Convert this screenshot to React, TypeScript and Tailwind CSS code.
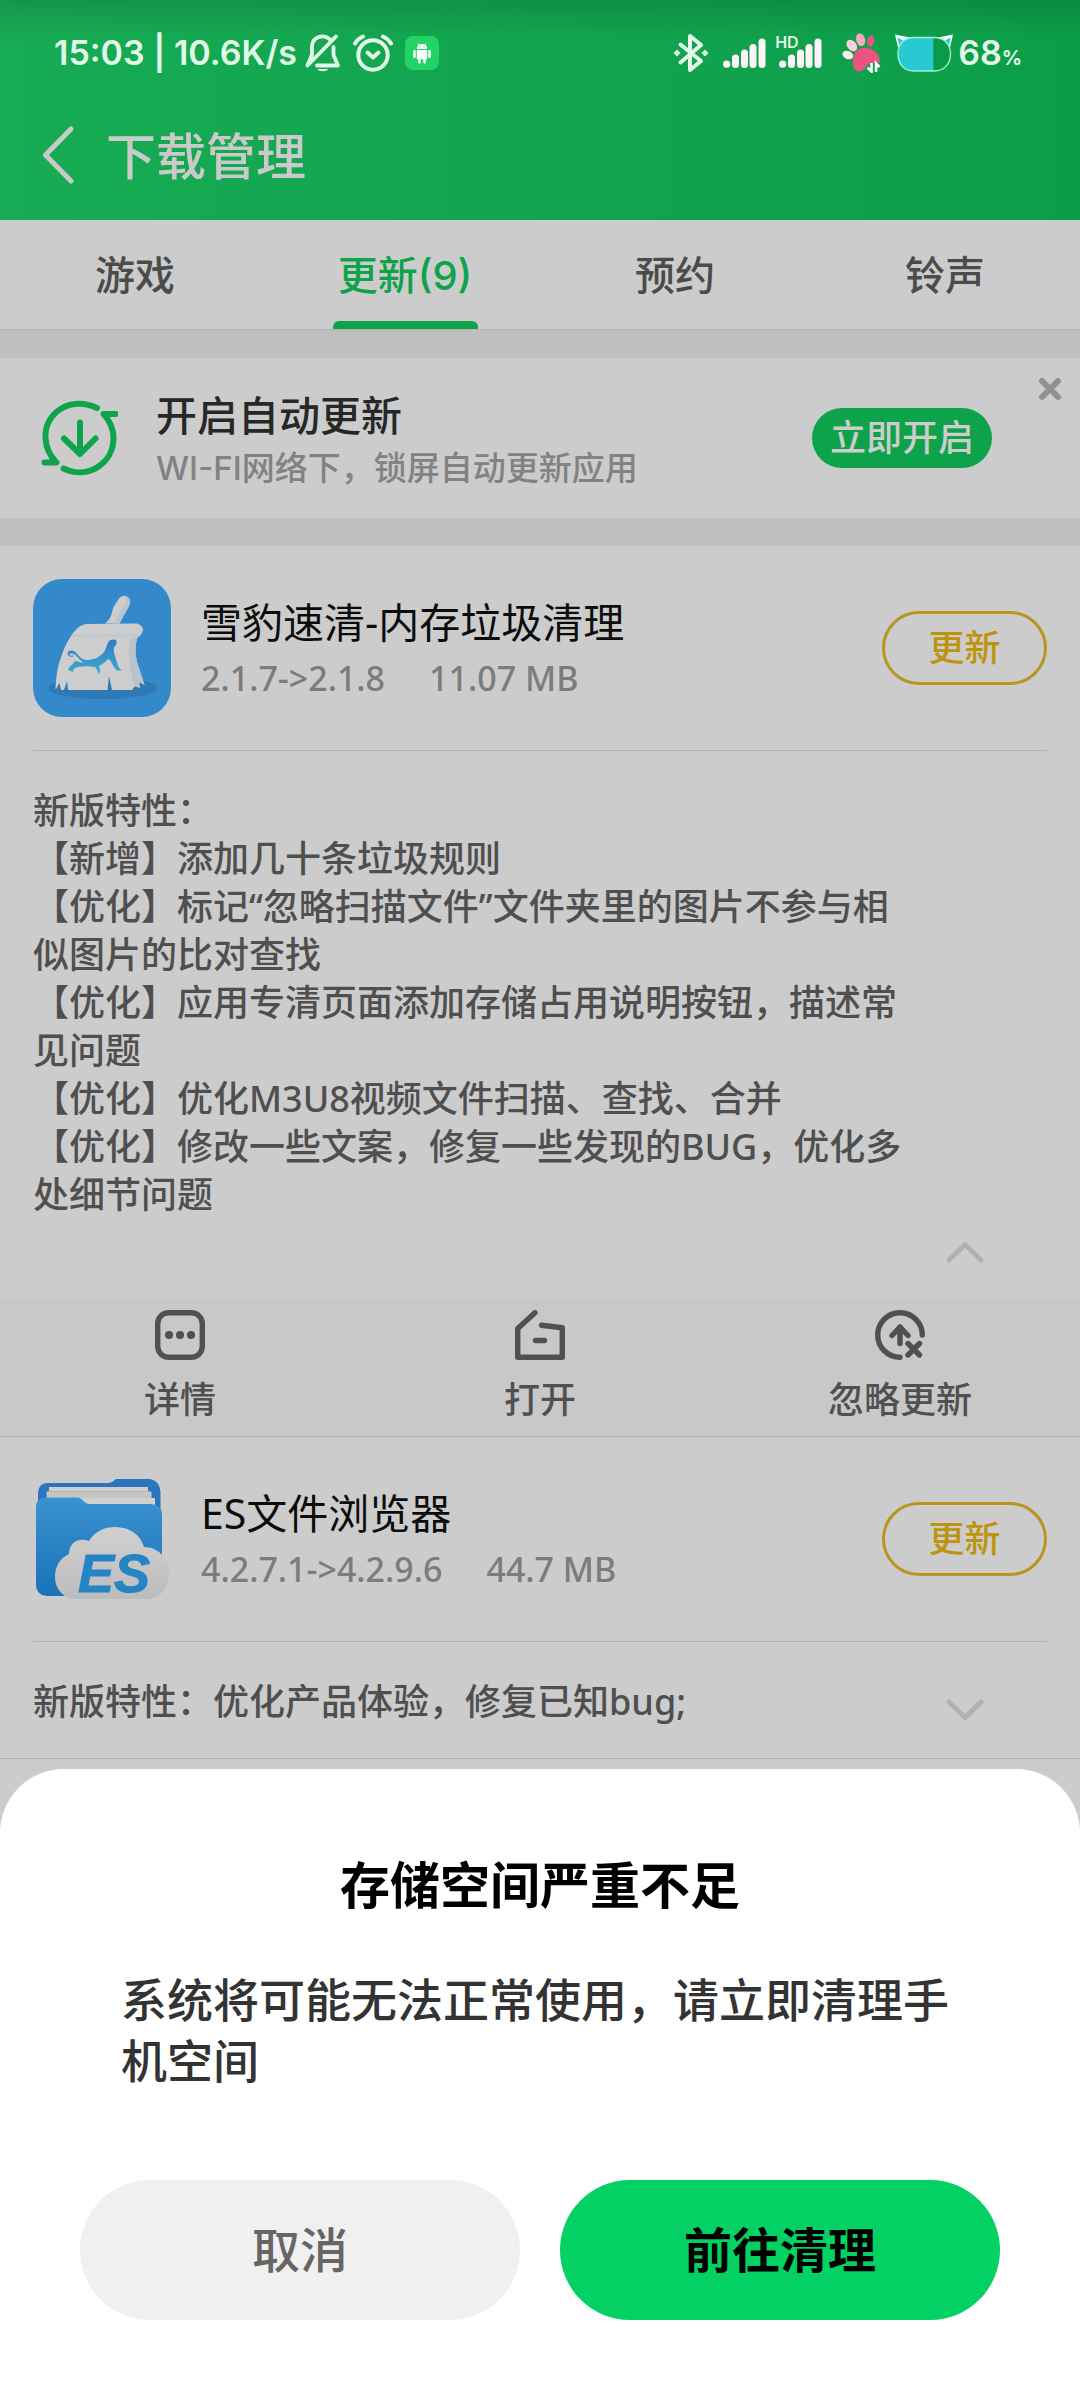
import React from "react";

const tabs = [
  { label: "游戏", active: false },
  { label: "更新(9)", active: true },
  { label: "预约", active: false },
  { label: "铃声", active: false },
];

const cleanerNotes = [
  "新版特性：",
  "【新增】添加几十条垃圾规则",
  "【优化】标记“忽略扫描文件”文件夹里的图片不参与相",
  "似图片的比对查找",
  "【优化】应用专清页面添加存储占用说明按钮，描述常",
  "见问题",
  "【优化】优化M3U8视频文件扫描、查找、合并",
  "【优化】修改一些文案，修复一些发现的BUG，优化多",
  "处细节问题",
];

const BellOffIcon = () => (
  <svg width="36" height="38" viewBox="0 0 36 38" fill="none" stroke="#e2f8e8" strokeWidth="3.8" strokeLinecap="round" strokeLinejoin="round">
    <path d="M25 5.5C22.500 3 20 2.300 17.500 2.300C10.500 2.300 7 7.500 7 13V20.500L2.500 31.500L31 2.500" />
    <path d="M28.500 13V21L33 31.500H12" />
    <path d="M12.500 35H23C22 38 13.500 38 12.500 35Z" fill="#e2f8e8" stroke="none" />
  </svg>
);

const AlarmIcon = () => (
  <svg width="40" height="38" viewBox="0 0 40 38" fill="none" stroke="#e2f8e8" strokeWidth="4" strokeLinecap="round" strokeLinejoin="round">
    <circle cx="20" cy="21" r="14.700" />
    <path d="M14.500 18.500L20 23.500L25.500 18.500" />
    <path d="M2 9.500C4 6 6.500 4 10 2.500M38 9.500C36 6 33.500 4 30 2.500" />
  </svg>
);

const AndroidBadge = () => (
  <svg width="34" height="34" viewBox="0 0 34 34">
    <rect width="34" height="34" rx="8" fill="#22d465" />
    <g fill="#fff">
      <path d="M11.800 13C12 9.800 14.300 8 17 8S22 9.800 22.200 13Z" />
      <path d="M11.800 14H22.200V23.200H20.800V26.200A1 1 0 0 1 18.300 26.200V23.200H15.700V26.200A1 1 0 0 1 13.200 26.200V23.200H11.800Z" />
      <rect x="8.200" y="14" width="2.600" height="8" rx="1.300" />
      <rect x="23.200" y="14" width="2.600" height="8" rx="1.300" />
    </g>
    <path d="M13.800 9L12.800 7.300M20.200 9L21.200 7.300" stroke="#fff" strokeWidth="0.800" />
    <circle cx="14.900" cy="10.900" r="0.600" fill="#22d465" />
    <circle cx="19.100" cy="10.900" r="0.600" fill="#22d465" />
  </svg>
);

const BluetoothIcon = () => (
  <svg width="36" height="40" viewBox="0 0 36 40" fill="none" stroke="#e2f8e8" strokeWidth="4" strokeLinejoin="round" strokeLinecap="round">
    <path d="M7.500 11.500L28 28L17 37V3L28 12L7.500 29.500" />
    <path d="M4 16.500L7.500 20L4 23.500L0.500 20ZM32 16.500L35.500 20L32 23.500L28.500 20Z" fill="#e2f8e8" stroke="none" />
  </svg>
);

const SignalBars = () => (
  <svg width="43" height="30" viewBox="0 0 43 30" fill="#fbf3f7">
    <circle cx="3.700" cy="26.200" r="3.600" />
    <rect x="9" y="16.500" width="7" height="13.500" rx="3.500" />
    <rect x="18" y="11.500" width="7" height="18.500" rx="3.500" />
    <rect x="26.500" y="6" width="7" height="24" rx="3.500" />
    <rect x="35.500" y="0.500" width="7" height="29.500" rx="3.500" />
  </svg>
);

const PawIcon = () => (
  <svg width="40" height="40" viewBox="0 0 40 40">
    <ellipse cx="5.800" cy="22" rx="5.600" ry="4" fill="#fbe9ee" transform="rotate(25 5.8 22)" />
    <ellipse cx="9.800" cy="12.500" rx="4.600" ry="6.500" fill="#fdd0dd" transform="rotate(-38 9.8 12.500)" />
    <ellipse cx="18.600" cy="6.800" rx="4.400" ry="6.500" fill="#fba9bf" transform="rotate(-14 18.600 6.800)" />
    <ellipse cx="28.700" cy="8.200" rx="3.500" ry="5.700" fill="#ea547f" transform="rotate(8 28.700 8.200)" />
    <path d="M13 20C16 14.500 23 14 28 15.500C34 17.500 38.500 23 37.500 29.500L27 30.500C24 33 22 38.500 17 38.500C10 38 9.500 26 13 20Z" fill="#ea547f" />
    <path d="M29.500 30V38.500L25.500 34.800M34 39V30.500L37.500 34" fill="none" stroke="#fff" strokeWidth="2.600" />
  </svg>
);

const CatBattery = () => (
  <svg width="60" height="40" viewBox="0 0 60 40">
    <path d="M1 1.500L16 4.500L4 14.500Z" fill="#fff" />
    <path d="M3.500 4.500L9 7.500L5 12.500Z" fill="#28c9d3" />
    <path d="M59 1.500L44 4.500L56 14.500Z" fill="#fff" />
    <path d="M56.500 4.500L51 7.500L55 12.500Z" fill="#28c9d3" />
    <path d="M39.500 4.500H20C9 4.500 4 12 4 21C4 31 9 38 20 38H39.500Z" fill="#28c9d3" />
    <path d="M39.500 4.500C51 4.500 56.500 12 56.500 21C56.500 31 51 38 39.500 38Z" fill="#0b9a47" />
    <path d="M20 4.500H40C51 4.500 56.500 12 56.500 21S51 38 40 38H20C9 38 4 30 4 21S9 4.500 20 4.500Z" fill="none" stroke="#9ff0d4" strokeWidth="1.400" />
  </svg>
);

const AutoUpdateIcon = () => (
  <svg width="78" height="76" viewBox="0 0 78 76" className="shrink-0" fill="none" stroke="#0fa44b" strokeWidth="6" strokeLinecap="round" strokeLinejoin="round">
    <path d="M57 8C31 -5 4 13 5.500 38C6 49 10 56 16.500 62.500H4.500" />
    <path d="M75.500 14H63.500C70 21 73.500 29 73.500 38C73.500 64 47 80 23.500 68.500" />
    <path d="M40 22.500V54M24 38.500L40 54L55.500 38.500" />
  </svg>
);

const CleanerIcon = () => (
  <svg width="138" height="138" viewBox="0 0 138 138" className="shrink-0">
    <defs>
      <linearGradient id="leopard" x1="0" y1="0" x2="0" y2="1">
        <stop offset="0" stopColor="#2f7fbf" />
        <stop offset="1" stopColor="#3fa9d2" />
      </linearGradient>
    </defs>
    <rect width="138" height="138" rx="29" fill="#3489cb" />
    <ellipse cx="69.500" cy="109" rx="54" ry="11" fill="#2e78b3" />
    <path d="M72 44.500C78 40 79 34 80 29L86 19.500C90 14 98 17 97 24C96 30 88 38 87 44.500Z" fill="#cdcdcd" />
    <path d="M91 17.500C98 17 98 24 95.500 28L86.500 44.500H82C84 36 90 30 92.500 24C93 21 92.500 19 91 17.500Z" fill="#b9c6cf" />
    <path d="M53 45L104 44.500Q109 46 110 50Q110 55 104 59Q101 72 104 83L111.500 106L106 103L107 109L102 107L99 111H79L76 97L74.500 111H35L34 102L31 111H28L26.500 104L22.500 111C23 99 24 88 28.500 77C31 68 36 60 40 54Q46 46 53 45Z" fill="#cdcdcd" />
    <path d="M40 55.500H108L106 57.500H39Z" fill="#b7c9d6" />
    <path d="M97 59H104Q101 72 104 83L111.500 106L106 103L107 109L101 107Q94 82 97 59Z" fill="#b7c4cb" />
    <path d="M40 78C34 79 32 71 39 71.500C44 72 47 81 53 81C61 81 66 79 71 73C75 68 73 61 80 60.500C84 60 85 64 82 67C79 70 82 76 84 83C85 88 87 90 89 91.500H84C79 88 79 81 75 80C72 84 69 85 66 87C67 90 68 93 66 95C64 92 64 90 62 88C55 87 50 87 45 88C41 89 40 91 40 93L35 91C36 87 40 86 41 83C43 81 47 84 50 84C45 79 41 73 37 75C36 77 38 77 40 76Z" fill="url(#leopard)" />
  </svg>
);

const EsIcon = () => (
  <svg width="138" height="138" viewBox="0 0 138 138" className="shrink-0">
    <defs>
      <linearGradient id="folder" x1="0" y1="0" x2="0" y2="1">
        <stop offset="0" stopColor="#3b92d0" />
        <stop offset="1" stopColor="#1873b8" />
      </linearGradient>
      <linearGradient id="cloud" x1="0" y1="0" x2="0" y2="1">
        <stop offset="0" stopColor="#d0d0d0" />
        <stop offset="1" stopColor="#bcbcbe" />
      </linearGradient>
    </defs>
    <path d="M5 40V22Q6 13 15 13H76Q80 12 83 9H117Q127 11 127.500 22V40Z" fill="#2a75bd" />
    <path d="M16 17H115V40H16Z" fill="#cfcfcf" />
    <path d="M13.500 22H118.500V40H13.500Z" fill="#c5c5c5" />
    <path d="M14 21.500H118" stroke="#b2b2b2" strokeWidth="0.800" />
    <path d="M40 28H122V42H40Z" fill="#d0d0d0" />
    <path d="M3 37Q3 27.500 12 27.500H45C50 28 50 33.500 56 34H118Q129 35 129 45V116Q129 126 119 126H14Q3 125 3 114Z" fill="url(#folder)" />
    <path d="M40 129C28 127 22 117 22 107C22 95 28 88 36 84C36 73 45 67 56 71C62 61 72 57 82 57C98 57 108 66 111 77C125 77 136 88 136 103C136 117 128 128 115 129Z" fill="url(#cloud)" />
    <text x="45" y="122" fontFamily="Liberation Sans, sans-serif" fontWeight="700" fontStyle="italic" fontSize="54" fill="#2784c4" stroke="#2784c4" strokeWidth="1">ES</text>
  </svg>
);

const DetailIcon = () => (
  <svg width="50" height="50" viewBox="0 0 50 50" fill="none" stroke="#505050">
    <rect x="2.700" y="2.700" width="44.600" height="44.600" rx="11" strokeWidth="5.400" />
    <path d="M14 25H14.100M25 25H25.100M36 25H36.100" strokeWidth="8" strokeLinecap="round" />
  </svg>
);

const OpenIcon = () => (
  <svg width="50" height="50" viewBox="0 0 50 50" fill="none" stroke="#505050" strokeWidth="5.400" strokeLinecap="round" strokeLinejoin="round">
    <path d="M20 2.700L2.700 18.500V47.300H47.300V17.700L26.500 15.200" />
    <path d="M20.500 30.500H29.500" />
  </svg>
);

const IgnoreIcon = () => (
  <svg width="50" height="50" viewBox="0 0 50 50" fill="none" stroke="#505050" strokeWidth="5.400" strokeLinecap="round" strokeLinejoin="round">
    <path d="M47.300 25A22.300 22.300 0 1 0 25 47.300" />
    <path d="M25 33.500V17M17 25.500L25 17L33 25.500" />
    <path d="M33 33.500L44.500 45M44.500 33.500L33 45" />
  </svg>
);

const Chevron = ({ up = false }: { up?: boolean }) => (
  <svg width="38" height="22" viewBox="0 0 38 22" fill="none" stroke="#b0b0b0" strokeWidth="5" strokeLinecap="round" strokeLinejoin="round">
    <path d={up ? "M3 19L19 3.500L35 19" : "M3 3L19 18.500L35 3"} />
  </svg>
);

const actions = [
  { label: "详情", icon: <DetailIcon /> },
  { label: "打开", icon: <OpenIcon /> },
  { label: "忽略更新", icon: <IgnoreIcon /> },
];

type AppRowProps = {
  icon: React.ReactNode;
  name: string;
  version: string;
  size: string;
};

const AppRow = ({ icon, name, version, size }: AppRowProps) => (
  <div className="mx-[33px] flex items-center border-b border-[#b3b3b3] py-[33px]">
    {icon}
    <div className="ml-[30px] flex-1">
      <h2 className="text-[41px] leading-[56px] text-[#0c0c0c]">{name}</h2>
      <p className="mt-1 flex gap-11 text-[34px] leading-[48px] font-medium text-[#7c7c7c]">
        <span>{version}</span>
        <span>{size}</span>
      </p>
    </div>
    <button
      type="button"
      className="h-[74px] w-[165px] rounded-full border-3 border-[#b8951f] text-[36px] leading-none font-medium text-[#bd940e]"
    >
      更新
    </button>
  </div>
);

const App = () => {
  return (
    <div className="min-h-screen bg-[#cccccc] font-['Noto_Sans','Noto_Sans_CJK_SC',sans-serif]">
      <header className="bg-linear-to-r from-[#17ab54] to-[#0c9d48]">
        <div className="flex h-[106px] items-center justify-between bg-linear-to-b from-black/12 to-transparent to-35% pr-[58px] pl-[54px] font-['Inter',sans-serif] text-[#e2f8e8]">
          <div className="flex items-center">
            <span className="text-[34px] leading-none font-semibold">15:03 | 10.6K/s</span>
            <div className="ml-2 flex items-center gap-3">
              <BellOffIcon />
              <AlarmIcon />
              <AndroidBadge />
            </div>
          </div>
          <div className="flex items-center">
            <BluetoothIcon />
            <div className="ml-[14px]">
              <SignalBars />
            </div>
            <div className="relative ml-[13px]">
              <SignalBars />
              <span className="absolute -top-1 -left-1 text-[16px] leading-none font-semibold">HD</span>
            </div>
            <div className="ml-5 flex items-center gap-3">
              <PawIcon />
              <CatBattery />
            </div>
            <span className="ml-1 text-[34px] leading-none font-semibold">
              68<span className="text-[20px] font-bold">%</span>
            </span>
          </div>
        </div>
        <div className="flex h-[114px] items-start pt-3 pl-10">
          <button type="button" aria-label="返回" className="py-2">
            <svg width="36" height="60" viewBox="0 0 36 60" fill="none" stroke="#c9c9c9" strokeWidth="5" strokeLinecap="round" strokeLinejoin="round">
              <path d="M31 3L5.500 29L31 55" />
            </svg>
          </button>
          <h1 className="ml-[30px] text-[50px] leading-[76px] font-medium text-[#cacaca]">下载管理</h1>
        </div>
      </header>

      <nav className="flex h-[110px] border-b border-[#b3b3b3] font-['Inter','Noto_Sans_CJK_SC',sans-serif]">
        {tabs.map((tab) => (
          <button
            key={tab.label}
            type="button"
            className={`flex flex-1 flex-col items-center justify-between pt-[26px] text-[40px] leading-[60px] font-medium ${
              tab.active ? "text-[#0ea34a]" : "text-[#4b4b4b]"
            }`}
          >
            {tab.label}
            {tab.active && <span className="h-2 w-[145px] rounded-t-md bg-[#0ea34a]" />}
          </button>
        ))}
      </nav>

      <section className="relative flex items-center border-y-28 border-[#bfbfbf] py-7 pr-[88px] pl-10 font-['Inter','Noto_Sans_CJK_SC',sans-serif]">
        <AutoUpdateIcon />
        <div className="ml-[38px] flex-1">
          <h2 className="text-[41px] leading-[60px] font-medium text-[#272727]">开启自动更新</h2>
          <p className="text-[33px] leading-[44px] font-medium text-[#828282]">WI-FI网络下，锁屏自动更新应用</p>
        </div>
        <button
          type="button"
          className="h-[60px] w-[180px] rounded-full bg-[#0ea34a] text-[36px] leading-none font-medium text-[#cccccc]"
        >
          立即开启
        </button>
        <button type="button" aria-label="关闭" className="absolute top-5 right-[18px]">
          <svg width="24" height="24" viewBox="0 0 24 24" stroke="#909090" strokeWidth="6" strokeLinecap="round">
            <path d="M4 3L20 19M20 3L4 19" />
          </svg>
        </button>
      </section>

      <main>
        <AppRow icon={<CleanerIcon />} name="雪豹速清-内存垃圾清理" version="2.1.7->2.1.8" size="11.07 MB" />
        <div className="px-[33px] pt-9 text-[36px] leading-[48px] font-medium text-[#4f4f4f]">
          {cleanerNotes.map((line) => (
            <p key={line}>{line}</p>
          ))}
        </div>
        <div className="flex justify-end pt-[22px] pr-[96px] pb-[35px]">
          <button type="button" aria-label="收起">
            <Chevron up />
          </button>
        </div>
        <div className="flex border-b border-[#b0b0b0] bg-[#c8c8c8] pt-3 pb-3">
          {actions.map((action) => (
            <button
              key={action.label}
              type="button"
              className="flex flex-1 flex-col items-center gap-4 text-[36px] leading-[48px] font-medium text-[#505050]"
            >
              {action.icon}
              {action.label}
            </button>
          ))}
        </div>

        <AppRow icon={<EsIcon />} name="ES文件浏览器" version="4.2.7.1->4.2.9.6" size="44.7 MB" />
        <div className="flex items-center justify-between border-b border-[#b0b0b0] pt-9 pr-[96px] pb-8 pl-[33px]">
          <p className="text-[36px] leading-[48px] font-medium text-[#4f4f4f]">新版特性：优化产品体验，修复已知bug;</p>
          <button type="button" aria-label="展开" className="pt-4">
            <Chevron />
          </button>
        </div>
      </main>

      {/* low storage sheet */}
      <div
        role="dialog"
        aria-labelledby="sheet-title"
        className="fixed inset-x-0 bottom-0 rounded-t-[64px] bg-white px-20 pt-20 pb-20"
      >
        <h2 id="sheet-title" className="text-center text-[50px] leading-[72px] font-bold text-black">
          存储空间严重不足
        </h2>
        <p className="mx-[41px] mt-12 text-[46px] leading-[61px] font-medium text-[#333333]">
          系统将可能无法正常使用，请立即清理手机空间
        </p>
        <div className="mt-[89px] flex gap-10">
          <button
            type="button"
            className="h-[140px] flex-1 rounded-full bg-[#f0f0f0] text-[48px] leading-none font-medium text-[#666666]"
          >
            取消
          </button>
          <button
            type="button"
            className="h-[140px] flex-1 rounded-full bg-[#03d163] text-[48px] leading-none font-bold text-black"
          >
            前往清理
          </button>
        </div>
      </div>
    </div>
  );
};

export default App;
